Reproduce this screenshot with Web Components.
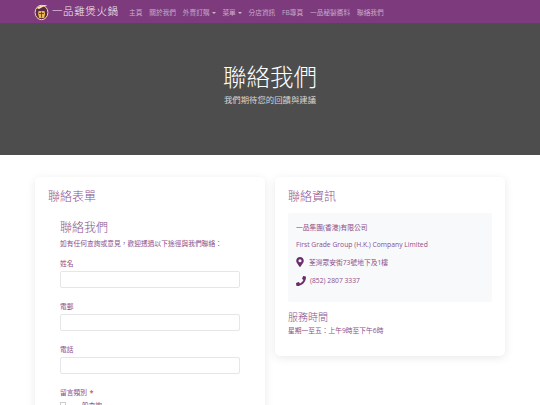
<!DOCTYPE html>
<html lang="zh-Hant">
<head>
<meta charset="utf-8">
<title>聯絡我們</title>
<style>
  html, body { margin: 0; height: 100%; overflow: hidden; background: #fff; }
  body { font-family: "Open Sans", "Noto Sans CJK TC", sans-serif; color: #7d3c7d; }
</style>
</head>
<body>
<site-nav></site-nav>
<page-hero heading="聯絡我們" sub="我們期待您的回饋與建議"></page-hero>
<contact-section>
  <info-card heading="聯絡表單" class="form">
    <contact-form></contact-form>
  </info-card>
  <info-card heading="聯絡資訊">
    <contact-info></contact-info>
  </info-card>
</contact-section>

<script>
const CJK = '"Open Sans", "Noto Sans CJK TC", sans-serif';

class SiteNav extends HTMLElement {
  constructor() {
    super();
    const items = [['主頁'], ['關於我們'], ['外賣訂購', 1], ['菜單', 1], ['分店資訊'], ['FB專頁'], ['一品秘製醬料'], ['聯絡我們']];
    this.attachShadow({ mode: 'open' }).innerHTML = `
      <style>
        :host { display: flex; align-items: center; height: 23px; padding-left: 34px; background: #7d3a7c; font-family: ${CJK}; }
        svg { width: 15px; height: 18px; flex: none; }
        .brand { margin-left: 3px; font-size: 10.5px; font-weight: 300; letter-spacing: .6px; color: #f6eef3; white-space: nowrap; line-height: 1; }
        nav { display: flex; gap: 6.8px; margin-left: 10.5px; }
        a { font-size: 6.7px; color: #c9abc8; white-space: nowrap; }
        a.drop::after { content: ""; display: inline-block; margin-left: 2px; vertical-align: 1px; border: 2px solid transparent; border-top-color: #d4b5cf; border-bottom: 0; }
      </style>
      <svg viewBox="0 0 15 18">
        <ellipse cx="7.5" cy="9.5" rx="6.4" ry="7.2" fill="#5a2a4a" stroke="#f2d9a0" stroke-width="1"/>
        <path d="M2.5 5Q8 1 13.5 2.5Q9 3 5 6Z" fill="#f7e3ae"/>
        <path d="M4.5 8h6l.6 3-1 4h-5l-1-4Z" fill="#e9b64f"/>
        <path d="M5 10.5h5M7.5 8.5v6" stroke="#5a2a4a" stroke-width=".8"/>
      </svg>
      <span class="brand">一品雞煲火鍋</span>
      <nav>${items.map(([t, d]) => `<a class="${d ? 'drop' : ''}">${t}</a>`).join('')}</nav>`;
  }
}
customElements.define('site-nav', SiteNav);

class PageHero extends HTMLElement {
  connectedCallback() {
    this.attachShadow({ mode: 'open' }).innerHTML = `
      <style>
        :host { display: flex; flex-direction: column; align-items: center; height: 132px; padding-top: 40px; box-sizing: border-box; background: #4d4d4d; color: #fff; font-family: ${CJK}; }
        h1 { margin: 0; font-size: 23.5px; font-weight: 200; line-height: 29px; }
        p { margin: 1px 0 0; font-size: 8.4px; line-height: 13px; color: #d4d4d4; }
      </style>
      <h1>${this.getAttribute('heading')}</h1>
      <p>${this.getAttribute('sub')}</p>`;
  }
}
customElements.define('page-hero', PageHero);

class ContactSection extends HTMLElement {
  constructor() {
    super();
    this.attachShadow({ mode: 'open' }).innerHTML = `
      <style>
        :host { display: grid; grid-template-columns: 230px 230px; gap: 10px; align-items: start; justify-content: center; padding-top: 22px; }
      </style>
      <slot></slot>`;
  }
}
customElements.define('contact-section', ContactSection);

class InfoCard extends HTMLElement {
  connectedCallback() {
    this.attachShadow({ mode: 'open' }).innerHTML = `
      <style>
        :host { display: block; padding: 12px 13px 13px; background: #fff; border-radius: 5px; box-shadow: 0 2px 10px rgba(0,0,0,.09); font-family: ${CJK}; }
        h2 { margin: 0 0 9px; font-size: 12px; font-weight: 200; line-height: 15px; color: #8a508a; }
      </style>
      <h2>${this.getAttribute('heading')}</h2>
      <slot></slot>`;
  }
}
customElements.define('info-card', InfoCard);

class ContactForm extends HTMLElement {
  constructor() {
    super();
    const field = t => `<label>${t}</label><div class="input"></div>`;
    this.attachShadow({ mode: 'open' }).innerHTML = `
      <style>
        :host { display: block; padding: 7px 12px 0; color: #8a4f8a; font-size: 6.75px; }
        h3 { margin: 0; font-size: 12px; font-weight: 200; line-height: 15px; }
        p { margin: 4px 0 11px; line-height: 9px; }
        label { display: block; line-height: 9px; margin-bottom: 3px; }
        .input { height: 15px; margin-bottom: 14px; border: 1px solid #e6e6e9; border-radius: 2px; }
        b { margin-left: 1px; color: #d9534f; font-weight: 700; }
        .check { display: flex; align-items: center; gap: 9px; }
        .check i { width: 4px; height: 4px; border: 1px solid #ccc; }
      </style>
      <h3>聯絡我們</h3>
      <p>如有任何查詢或意見，歡迎透過以下途徑與我們聯絡：</p>
      ${field('姓名')}${field('電郵')}${field('電話')}
      <label>留言類別 <b>*</b></label>
      <div class="check"><i></i>一般查詢</div>`;
  }
}
customElements.define('contact-form', ContactForm);

class ContactInfo extends HTMLElement {
  constructor() {
    super();
    this.attachShadow({ mode: 'open' }).innerHTML = `
      <style>
        :host { display: block; padding-bottom: 8px; color: #8a4f8a; font-size: 6.75px; }
        .box { display: flex; flex-direction: column; gap: 8.4px; padding: 9.5px 8px 16.5px; background: #f8f9fb; border-radius: 2px; line-height: 9px; }
        .row { display: flex; align-items: center; gap: 5px; }
        .row.tel { gap: 4px; }
        svg { height: 10px; flex: none; fill: #6b2c6b; }
        .pin { width: 8px; }
        .phone { width: 10px; }
        h4 { margin: 9px 0 2px; font-size: 10px; font-weight: 200; line-height: 13px; color: #8a508a; }
        p { margin: 0; line-height: 9px; }
      </style>
      <div class="box">
        <div>一品集團(香港)有限公司</div>
        <div>First Grade Group (H.K.) Company Limited</div>
        <div class="row"><svg class="pin" viewBox="0 0 384 512"><path d="M172 502C27 291 0 269 0 192 0 86 86 0 192 0s192 86 192 192c0 77-27 99-172 310a24 24 0 0 1-40 0zm20-230a80 80 0 1 0 0-160 80 80 0 0 0 0 160z"/></svg>荃灣眾安街73號地下及1樓</div>
        <div class="row tel"><svg class="phone" viewBox="0 0 512 512"><path d="M493 24 389 0a24 24 0 0 0-27 14l-48 112a24 24 0 0 0 7 28l61 50a371 371 0 0 1-177 177l-50-61a24 24 0 0 0-28-7L14 361a24 24 0 0 0-14 28l24 104a24 24 0 0 0 23 19c256 0 465-208 465-465a24 24 0 0 0-19-23z"/></svg>(852) 2807 3337</div>
      </div>
      <h4>服務時間</h4>
      <p>星期一至五：上午9時至下午6時</p>`;
  }
}
customElements.define('contact-info', ContactInfo);
</script>
</body>
</html>
